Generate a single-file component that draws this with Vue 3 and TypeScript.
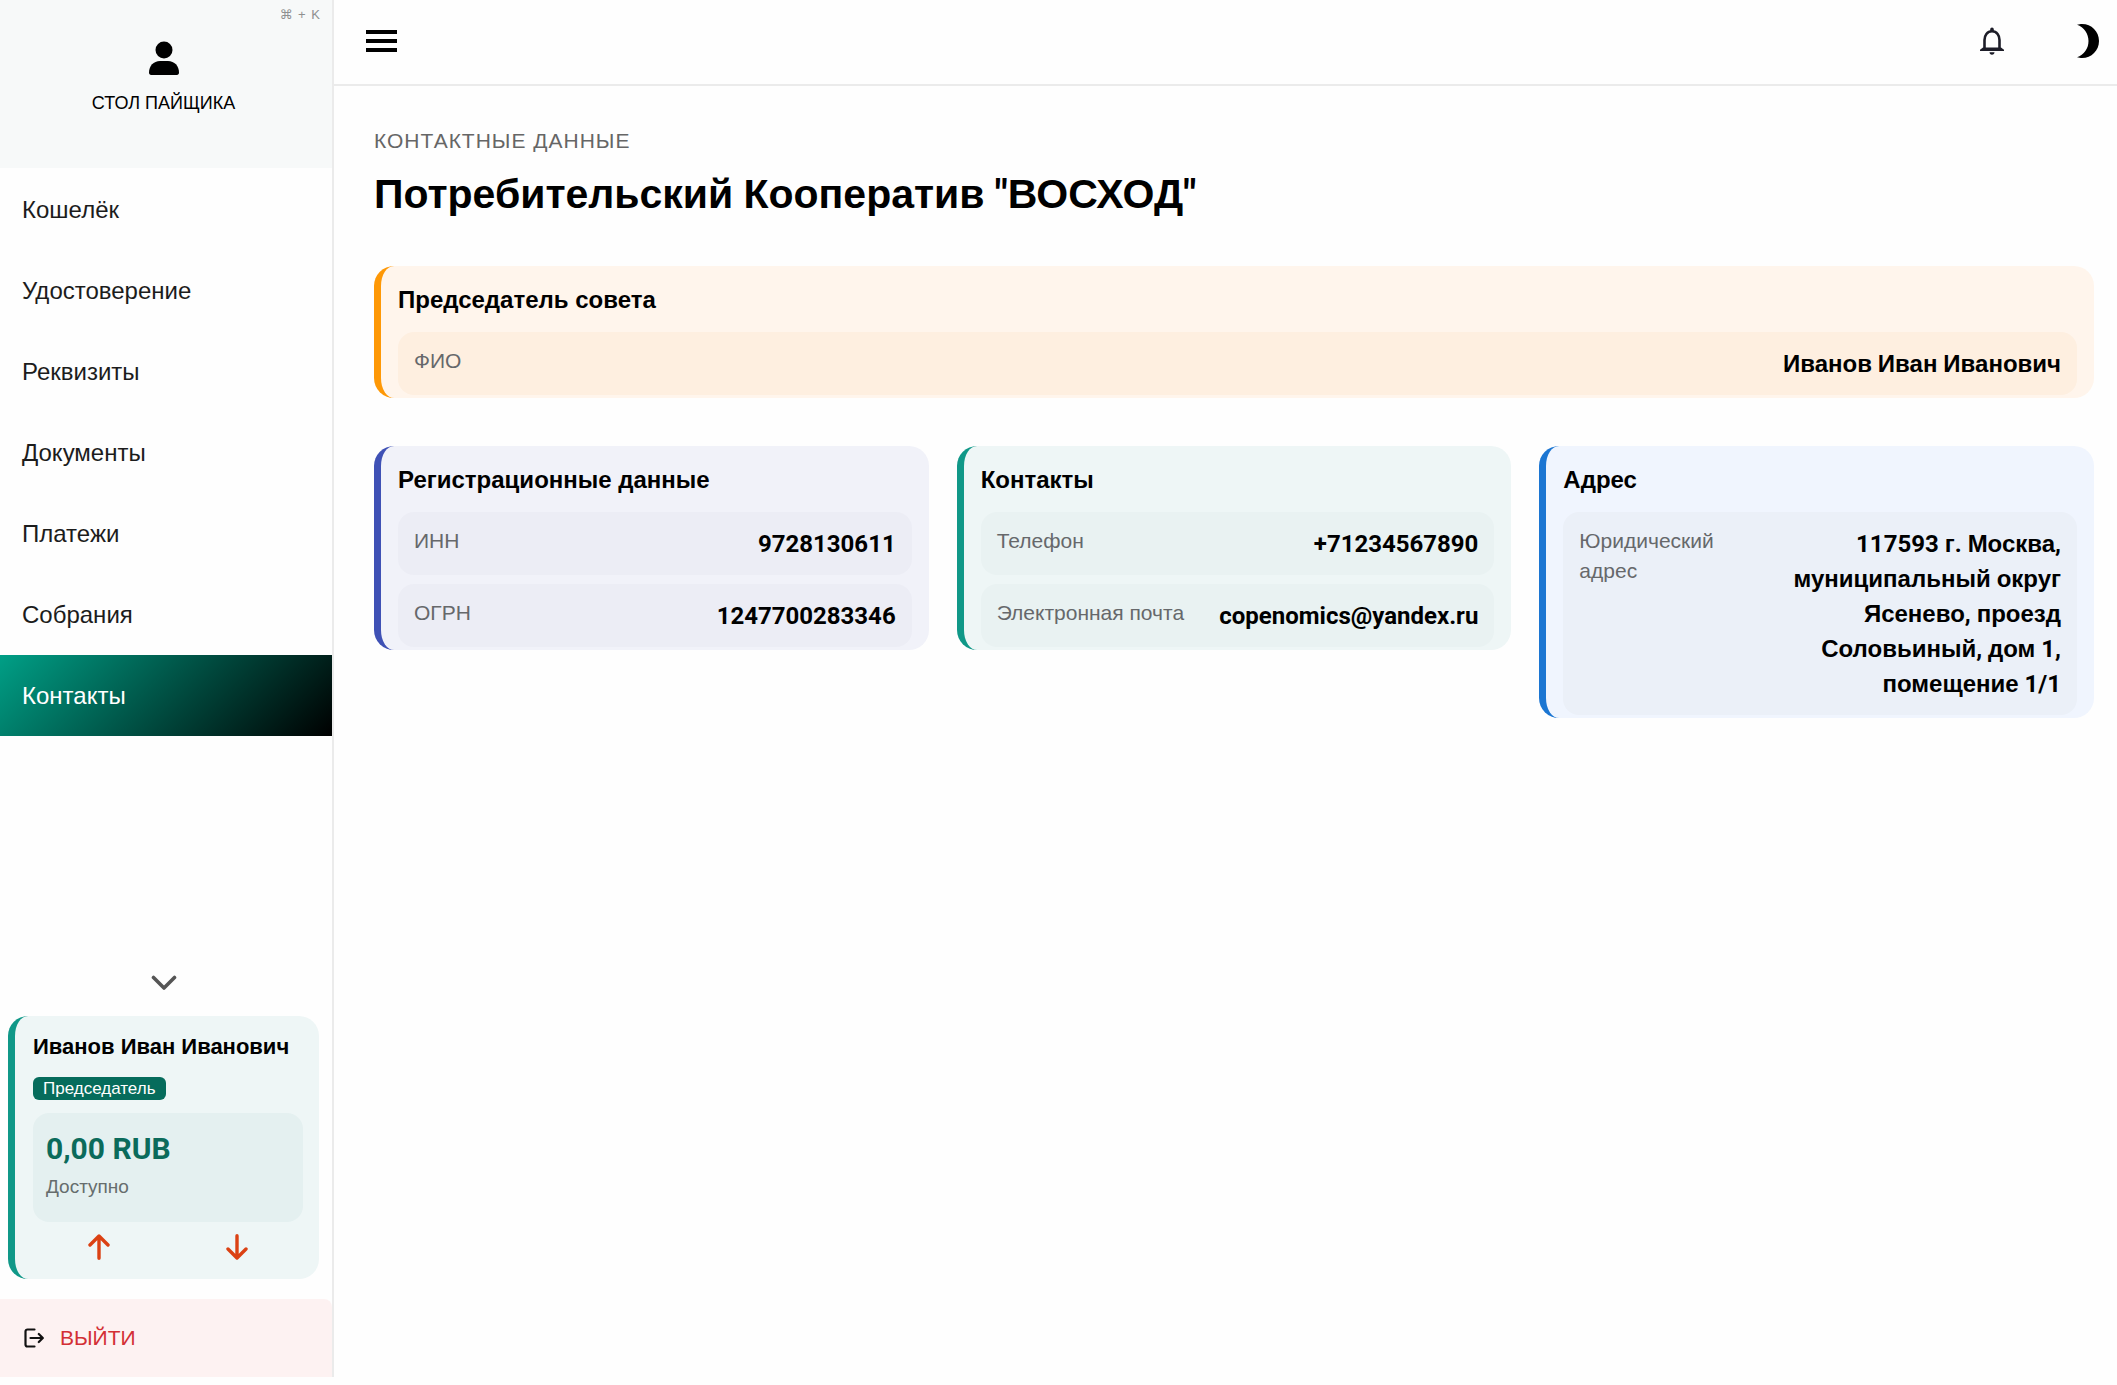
<script setup lang="ts">
interface Run {
  text: string
  cyrillic: boolean
}

interface Field {
  label: string
  value: string
}

interface InfoCard {
  title: string
  tone: string
  fields: Field[]
}

const navItems: string[] = ['Кошелёк', 'Удостоверение', 'Реквизиты', 'Документы', 'Платежи', 'Собрания', 'Контакты']
const activeItem = 'Контакты'
const organisation = 'Потребительский Кооператив "ВОСХОД"'

const chairman: InfoCard = {
  title: 'Председатель совета',
  tone: 'orange',
  fields: [{ label: 'ФИО', value: 'Иванов Иван Иванович' }],
}

const cards: InfoCard[] = [
  {
    title: 'Регистрационные данные',
    tone: 'indigo',
    fields: [
      { label: 'ИНН', value: '9728130611' },
      { label: 'ОГРН', value: '1247700283346' },
    ],
  },
  {
    title: 'Контакты',
    tone: 'teal',
    fields: [
      { label: 'Телефон', value: '+71234567890' },
      { label: 'Электронная почта', value: 'copenomics@yandex.ru' },
    ],
  },
  {
    title: 'Адрес',
    tone: 'blue',
    fields: [
      {
        label: 'Юридический адрес',
        value: '117593 г. Москва, муниципальный округ Ясенево, проезд Соловьиный, дом 1, помещение 1/1',
      },
    ],
  },
]

const groups: InfoCard[][] = [[chairman], cards]

// Digits and Latin are set in Roboto, Cyrillic in the Helvetica-like face.
function runs(value: string): Run[] {
  const parts = value.match(/[\u0400-\u04FF]+|[^\u0400-\u04FF]+/g) ?? []
  return parts.map((text) => ({ text, cyrillic: /[\u0400-\u04FF]/.test(text) }))
}
</script>

<template>
  <div class="app">
    <aside class="sidebar">
      <button class="desk" type="button">
        <span class="shortcut">⌘ + K</span>
        <svg class="desk-icon" viewBox="0 0 30 34" aria-hidden="true">
          <circle cx="15" cy="9" r="8.5" />
          <path d="M0 31.5C0 25 4.500 20 11 20h8c6.500 0 11 5 11 11.500 0 1.600-.8 2.500-2.200 2.500H2.200C.8 34 0 33.100 0 31.500z" />
        </svg>
        <span class="desk-name">СТОЛ ПАЙЩИКА</span>
      </button>

      <nav class="nav">
        <a v-for="item in navItems" :key="item" href="#" class="nav-item" :class="{ active: item === activeItem }">{{ item }}</a>
      </nav>

      <button class="collapse" type="button" aria-label="Свернуть">
        <svg width="26" height="16" viewBox="0 0 26 16" aria-hidden="true">
          <path d="M2.500 2.500 13 13 23.500 2.500" fill="none" stroke="#555" stroke-width="3.600" stroke-linecap="round" stroke-linejoin="round" />
        </svg>
      </button>

      <section class="user-card">
        <div class="user-name">Иванов Иван Иванович</div>
        <span class="chip">Председатель</span>
        <div class="balance">
          <div class="amount">0,00 RUB</div>
          <div class="amount-label">Доступно</div>
        </div>
        <div class="user-actions">
          <button type="button" aria-label="Пополнить">
            <svg width="22" height="26" viewBox="0 0 22 26" aria-hidden="true">
              <path d="M11 24.200V2.500M2 11l9-9 9 9" />
            </svg>
          </button>
          <button type="button" aria-label="Вывести">
            <svg width="22" height="26" viewBox="0 0 22 26" aria-hidden="true">
              <path d="M11 1.800V23.500M2 15l9 9 9-9" />
            </svg>
          </button>
        </div>
      </section>

      <button class="logout" type="button">
        <svg width="20" height="20" viewBox="0 0 20 20" aria-hidden="true">
          <path d="M10.500 1.500H3.500a2 2 0 0 0-2 2v13a2 2 0 0 0 2 2h7M6.500 10h12M14.800 6l4 4-4 4" fill="none" stroke="#111" stroke-width="2.200" stroke-linecap="round" stroke-linejoin="round" />
        </svg>
        <span>ВЫЙТИ</span>
      </button>
    </aside>

    <div class="content">
      <header class="topbar">
        <button class="icon-btn menu" type="button" aria-label="Меню">
          <svg width="31" height="22" viewBox="0 0 31 22" aria-hidden="true">
            <path d="M0 0h31v4H0zM0 9h31v4H0zM0 18h31v4H0z" />
          </svg>
        </button>
        <button class="icon-btn bell" type="button" aria-label="Уведомления">
          <svg width="24" height="28" viewBox="0 0 24 28" aria-hidden="true">
            <path d="M4.500 22.500V13c0-4.500 2.600-8.700 7.500-8.700s7.500 4.200 7.500 8.700v9.500" fill="none" stroke="#1d1d28" stroke-width="2.600" />
            <path d="M0 24v-1.200l3-2.300h18l3 2.300V24zM9.500 25.300h5c0 1.600-1 2.500-2.500 2.500s-2.500-.9-2.500-2.500zM10.200 4.500V2.300a1.800 1.800 0 0 1 3.600 0v2.200z" fill="#1d1d28" />
          </svg>
        </button>
        <button class="icon-btn" type="button" aria-label="Тёмная тема">
          <svg width="22" height="34" viewBox="0 0 22 34" aria-hidden="true">
            <path d="M0 .7C2 .2 3.500 0 5 0c9.500 0 17 7.500 17 17s-7.500 17-17 17c-1.500 0-3-.2-5-.7C7 31 11.500 24.500 11.500 17S7 3 0 .7z" />
          </svg>
        </button>
      </header>

      <main class="page">
        <div class="eyebrow">КОНТАКТНЫЕ ДАННЫЕ</div>
        <h1><span v-for="(run, i) in runs(organisation)" :key="i" :class="{ latin: !run.cyrillic }">{{ run.text }}</span></h1>

        <div v-for="(group, index) in groups" :key="index" class="cards">
          <section v-for="card in group" :key="card.title" class="card" :class="card.tone">
            <h2>{{ card.title }}</h2>
            <dl>
              <div v-for="field in card.fields" :key="field.label" class="field">
                <dt>{{ field.label }}</dt>
                <dd><span v-for="(run, i) in runs(field.value)" :key="i" :class="{ latin: !run.cyrillic }">{{ run.text }}</span></dd>
              </div>
            </dl>
          </section>
        </div>
      </main>
    </div>
  </div>
</template>

<style>
body {
  margin: 0;
  background: #fefefe;
}
</style>

<style scoped>
.app {
  display: flex;
  min-height: 100vh;
  box-sizing: border-box;
  padding-bottom: 8px;
  font-family: "Liberation Sans", Arial, sans-serif;
  color: #000;
}

button {
  border: 0;
  padding: 0;
  background: none;
  font: inherit;
  color: inherit;
  cursor: pointer;
}

svg {
  display: block;
}

.sidebar {
  flex: 0 0 332px;
  display: flex;
  flex-direction: column;
  border-right: 2px solid #ebebeb;
}

.desk {
  position: relative;
  display: flex;
  flex-direction: column;
  align-items: center;
  box-sizing: border-box;
  height: 168px;
  padding-top: 41px;
  padding-right: 5px;
  background: #f7f9f9;
}

.shortcut {
  position: absolute;
  top: 6px;
  right: 11px;
  font-family: "Liberation Sans", "DejaVu Sans", sans-serif;
  font-size: 13px;
  line-height: 18px;
  letter-spacing: 1px;
  color: #8e9090;
}

.desk-icon {
  width: 30px;
  height: 34px;
}

.desk-name {
  margin-top: 16px;
  font-size: 18px;
  line-height: 24px;
  font-weight: 500;
}

.nav {
  padding-top: 1px;
}

.nav-item {
  display: flex;
  align-items: center;
  height: 81px;
  padding-left: 22px;
  font-size: 24px;
  color: #1c1c1c;
  text-decoration: none;
}

.nav-item.active {
  color: #fff;
  background: linear-gradient(135deg, #009f86, #000);
}

.collapse {
  align-self: center;
  margin: auto 5px 25px 0;
}

.user-card {
  margin: 0 13px 20px 8px;
  padding: 15px 16px 19px 18px;
  border-left: 7px solid #109888;
  border-radius: 20px;
  background: #eef6f6;
}

.user-name {
  font-size: 22px;
  line-height: 32px;
  font-weight: 700;
  white-space: nowrap;
}

.chip {
  display: block;
  width: fit-content;
  margin-top: 14px;
  padding: 0 10px;
  border-radius: 6px;
  font-size: 17px;
  line-height: 23px;
  color: #fff;
  background: #066c5c;
}

.balance {
  box-sizing: border-box;
  height: 109px;
  margin-top: 13px;
  padding: 18px 13px;
  border-radius: 16px;
  background: #e4f0f0;
}

.amount {
  font-family: Roboto, sans-serif;
  font-size: 30px;
  line-height: 36px;
  font-weight: 700;
  color: #0b6b5b;
}

.amount-label {
  font-size: 19px;
  line-height: 40px;
  color: #666d6d;
}

.user-actions {
  display: flex;
  gap: 6px;
  padding-top: 12px;
}

.user-actions button {
  flex: 1;
}

.user-actions svg {
  margin: 0 auto;
}

.user-actions path {
  fill: none;
  stroke: #db4113;
  stroke-width: 3.4;
  stroke-linecap: round;
  stroke-linejoin: round;
}

.logout {
  display: flex;
  align-items: center;
  gap: 16px;
  height: 78px;
  padding-left: 24px;
  border-top-right-radius: 8px;
  font-size: 21px;
  color: #d32f35;
  background: #fdf2f2;
}

.content {
  flex: 1;
  min-width: 0;
}

.topbar {
  display: flex;
  align-items: center;
  box-sizing: border-box;
  height: 86px;
  padding: 0 18px 2px 32px;
  border-bottom: 2px solid #ebebeb;
}

.menu {
  margin-right: auto;
}

.bell {
  margin-right: 73px;
}

.page {
  padding: 40px 23px 40px 40px;
}

.eyebrow {
  font-size: 21px;
  line-height: 30px;
  letter-spacing: 1px;
  color: #666;
}

h1 {
  margin: 12px 0 46px;
  font-size: 41px;
  line-height: 52px;
  font-weight: 700;
}

.cards {
  display: flex;
  align-items: flex-start;
  gap: 28px;
  margin-bottom: 48px;
}

.card {
  flex: 1 1 0;
  min-width: 0;
  box-sizing: border-box;
  padding: 18px 17px 3px;
  border-left: 7px solid;
  border-radius: 20px;
}

h2 {
  margin: 0 0 16px;
  font-size: 24px;
  line-height: 32px;
  font-weight: 700;
}

dl {
  display: flex;
  flex-direction: column;
  gap: 9px;
  margin: 0;
}

.field {
  display: flex;
  justify-content: space-between;
  gap: 24px;
  padding: 14px 16px;
  border-radius: 16px;
}

dt {
  flex: 0 1 auto;
  font-size: 21px;
  line-height: 30px;
  color: #66686b;
}

dd {
  margin: 0;
  max-width: 60%;
  font-size: 24px;
  line-height: 35px;
  font-weight: 700;
  text-align: right;
}

/* A short line box keeps the second face from stretching the line. */
.latin {
  font-family: Roboto, sans-serif;
  line-height: 1;
}

.orange {
  border-color: #fe9806;
  background: #fff5ec;
}

.orange .field {
  background: #feefe0;
}

.indigo {
  border-color: #3f51b5;
  background: #f1f2f9;
}

.indigo .field {
  background: #ecedf5;
}

.teal {
  border-color: #109888;
  background: #eef6f6;
}

.teal .field {
  background: #e9f2f2;
}

.blue {
  border-color: #1c76d2;
  background: #f0f5fe;
}

.blue .field {
  background: #ebf0f8;
}
</style>
